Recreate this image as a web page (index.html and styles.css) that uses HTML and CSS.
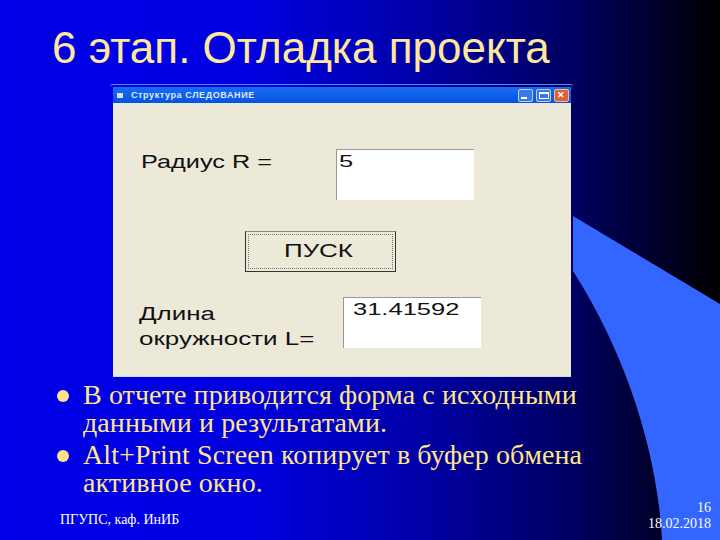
FILE: index.html
```html
<!DOCTYPE html>
<html lang="ru">
<head>
<meta charset="utf-8">
<title>6 этап. Отладка проекта</title>
<link rel="stylesheet" href="styles.css">
</head>
<body>
<main class="slide">
  <svg class="wave" viewBox="0 0 720 540" width="720" height="540" aria-hidden="true">
    <path d="M573 216 L720 304 V540 H662 C658 460 630 360 573 271 Z" fill="#3366ff"/>
  </svg>
  <h1 class="title">6 этап. Отладка проекта</h1>
  <section class="window">
    <header class="titlebar">
      <span class="app-icon"></span>
      <span class="caption">Структура СЛЕДОВАНИЕ</span>
      <span class="controls">
        <span class="ctl ctl-min"><span class="glyph-min"></span></span>
        <span class="ctl ctl-max"><span class="glyph-max"></span></span>
        <span class="ctl ctl-close">✕</span>
      </span>
    </header>
    <div class="form">
      <div class="row row-radius">
        <span class="label label-radius"><span class="wide">Радиус R =</span></span>
        <span class="field field-r"><span class="wide wide-5">5</span></span>
      </div>
      <div class="btn"><span class="btn-focus"><span class="wide wide-btn">ПУСК</span></span></div>
      <div class="row row-length">
        <span class="label label-length"><span class="wide wide-len">Длина<br>окружности L=</span></span>
        <span class="field field-l"><span class="wide wide-num">31.41592</span></span>
      </div>
    </div>
  </section>
  <ul class="bullets">
    <li>В отчете приводится форма с исходными данными и результатами.</li>
    <li>Alt+Print Screen копирует в буфер обмена активное окно.</li>
  </ul>
  <footer class="footer">
    <span class="org">ПГУПС, каф. ИнИБ</span>
    <span class="meta">16<br>18.02.2018</span>
  </footer>
</main>
</body>
</html>
```

FILE: styles.css
```css
* { box-sizing: border-box; }
html, body { margin: 0; padding: 0; }
body { width: 720px; height: 540px; overflow: hidden; }

.slide {
  position: relative;
  width: 720px;
  height: 540px;
  padding: 22px 0 0 52px;
  display: flex;
  flex-direction: column;
  background: linear-gradient(90deg, #0000e8 0%, #0000e0 35%, #0000a8 58%, #000060 80%, #000000 100%);
  font-family: "Liberation Serif", serif;
  overflow: hidden;
}
.wave { position: absolute; left: 0; top: 0; }

.title {
  position: relative;
  margin: 0;
  height: 62px;
  font: 400 44px/52px "Liberation Sans", sans-serif;
  color: #ffe79c;
  white-space: nowrap;
}

.window {
  position: relative;
  width: 463px;
  height: 294px;
  margin-left: 58px;
  display: flex;
  flex-direction: column;
  padding: 2px 2px 1px 3px;
  border-top: 1px solid #5a86e8;
  border-radius: 3px 3px 0 0;
}
.titlebar {
  height: 16px;
  display: flex;
  align-items: center;
  padding: 0 2px 0 4px;
  background: linear-gradient(180deg, #1a6cf0, #0454e0);
  color: #dfe9ff;
  font: 700 9px/16px "Liberation Sans", sans-serif;
  letter-spacing: 0.6px;
}
.app-icon { width: 6px; height: 5px; margin-right: 8px; background: #d8e0f0; }
.caption { white-space: nowrap; }
.controls { margin-left: auto; display: flex; gap: 3px; }
.ctl {
  width: 15px;
  height: 13px;
  display: flex;
  align-items: center;
  justify-content: center;
  background: #3a78e8;
  border: 1px solid #b8cff5;
  border-radius: 2px;
}
.glyph-min { width: 6px; height: 2px; background: #fff; margin: 6px 4px 0 0; }
.glyph-max { width: 10px; height: 7px; border: 1px solid #fff; border-top-width: 2px; }
.ctl-close { background: #e0603a; color: #fff; font-size: 9px; line-height: 1; border-color: #f0b8a0; font-weight: 700; }

.form {
  flex: 1;
  position: relative;
  background: #ece9d8;
  border-bottom: 1px solid #cfd8f0;
  padding-top: 46px;
  font-family: "Liberation Sans", sans-serif;
  color: #111;
}
.wide { display: inline-block; transform: scaleX(1.33); transform-origin: left center; white-space: nowrap; }
.wide-5 { transform: scaleX(1.5); }
.wide-btn { transform: scaleX(1.44); }
.wide-len { transform: scaleX(1.44); }
.wide-num { transform: scaleX(1.5); }
.row { display: flex; }
.label { font-size: 19px; line-height: 25px; }
.field {
  background: #fff;
  border-top: 1px solid #9a988c;
  border-left: 1px solid #9a988c;
  font-size: 17px;
}
.row-radius { height: 51px; padding-left: 28px; }
.label-radius { width: 195px; }
.field-r { width: 138px; height: 51px; padding-left: 2px; line-height: 24px; }

.btn {
  width: 151px;
  height: 41px;
  margin: 31px 0 0 132px;
  padding: 2px;
  border-left: 1px solid #333;
  border-right: 1px solid #333;
  border-top: 1px solid #888;
  border-bottom: 1px solid #333;
  background: #ece9d8;
}
.btn-focus {
  display: block;
  height: 100%;
  border: 1px dotted #777;
  text-align: center;
  font-size: 18px;
  line-height: 33px;
  padding-right: 26px;
}
.row-length { height: 51px; margin-top: 25px; padding-left: 26px; }
.label-length { width: 204px; padding-top: 5px; line-height: 25px; font-size: 18px; }
.field-l { width: 138px; height: 51px; padding-left: 9px; line-height: 24px; }

.bullets {
  position: relative;
  list-style: none;
  margin: 3px 0 0 0;
  padding: 0 0 0 31px;
  width: 550px;
  display: flex;
  flex-direction: column;
  gap: 4px;
  font-size: 28px;
  line-height: 28px;
  letter-spacing: 0.1px;
  color: #ffe58c;
}
.bullets li { position: relative; }
.bullets li::before {
  content: "";
  position: absolute;
  left: -26px;
  top: 9px;
  width: 12px;
  height: 12px;
  border-radius: 50%;
  background: #ffe08a;
}

.footer {
  position: absolute;
  left: 60px;
  right: 9px;
  bottom: 8px;
  display: flex;
  justify-content: space-between;
  align-items: flex-end;
  color: #fff;
  font-size: 14px;
  line-height: 16px;
}
.org { padding-bottom: 4px; }
.meta { text-align: right; }
```
